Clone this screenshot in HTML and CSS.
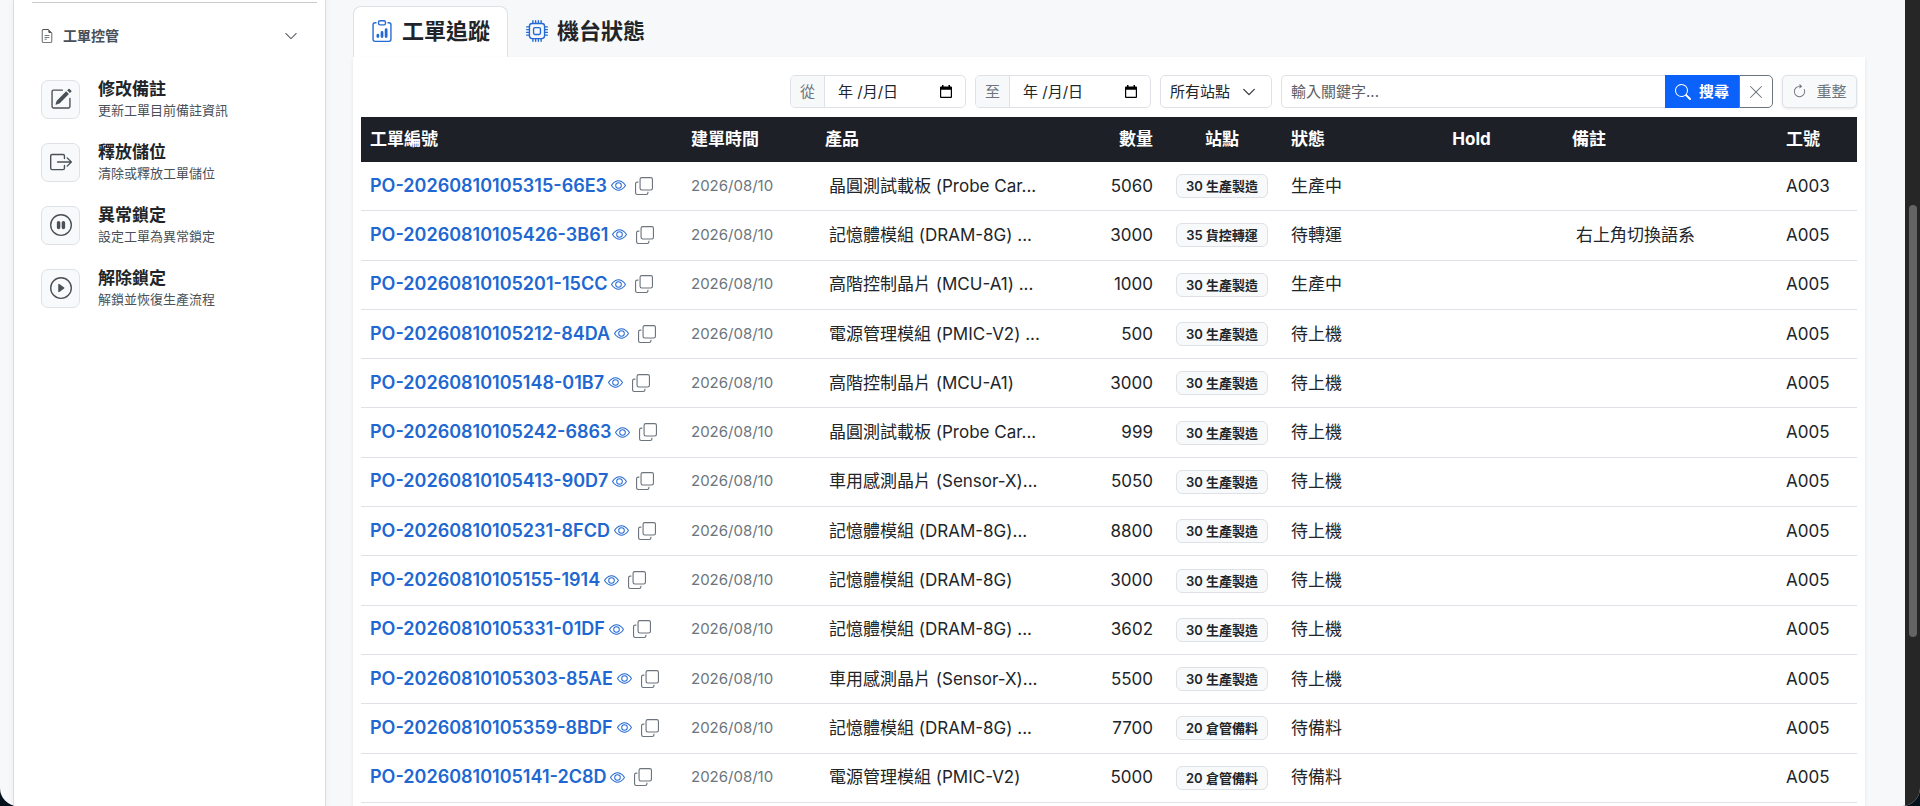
FILE: index.html
```
<!DOCTYPE html>
<html lang="zh-Hant">
<head>
    <meta charset="UTF-8">
    <meta name="viewport" content="width=device-width, initial-scale=1.0">
    <title>工單追蹤</title>
    <link rel="stylesheet" href="styles.css">
</head>
<body>
    <svg class="sprite" aria-hidden="true">
        <symbol id="i-file" viewBox="0 0 16 16">
            <path d="M5.5 7a.5.5 0 0 0 0 1h5a.5.5 0 0 0 0-1zM5 9.5a.5.5 0 0 1 .5-.5h5a.5.5 0 0 1 0 1h-5a.5.5 0 0 1-.5-.5m0 2a.5.5 0 0 1 .5-.5h2a.5.5 0 0 1 0 1h-2a.5.5 0 0 1-.5-.5"/>
            <path d="M9.5 0H4a2 2 0 0 0-2 2v12a2 2 0 0 0 2 2h8a2 2 0 0 0 2-2V4.500zm0 1v2A1.500 1.500 0 0 0 11 4.500h2V14a1 1 0 0 1-1 1H4a1 1 0 0 1-1-1V2a1 1 0 0 1 1-1z"/>
        </symbol>
        <symbol id="i-down" viewBox="0 0 16 16">
            <path fill-rule="evenodd" d="M1.646 4.646a.5.5 0 0 1 .708 0L8 10.293l5.646-5.647a.5.5 0 0 1 .708.708l-6 6a.5.5 0 0 1-.708 0l-6-6a.5.5 0 0 1 0-.708"/>
        </symbol>
        <symbol id="i-edit" viewBox="0 0 16 16">
            <path d="M15.502 1.940a.5.5 0 0 1 0 .706L14.459 3.690l-2-2L13.502.646a.5.5 0 0 1 .707 0l1.293 1.293zm-1.750 2.456-2-2L4.939 9.210a.5.5 0 0 0-.121.196l-.805 2.414a.25.25 0 0 0 .316.316l2.414-.805a.5.5 0 0 0 .196-.120z"/>
            <path fill-rule="evenodd" d="M1 13.500A1.500 1.500 0 0 0 2.500 15h11a1.500 1.500 0 0 0 1.500-1.500v-6a.5.5 0 0 0-1 0v6a.5.5 0 0 1-.5.5h-11a.5.5 0 0 1-.5-.5v-11a.5.5 0 0 1 .5-.5H9a.5.5 0 0 0 0-1H2.500A1.500 1.500 0 0 0 1 2.500z"/>
        </symbol>
        <symbol id="i-out" viewBox="0 0 16 16">
            <path fill-rule="evenodd" d="M10 12.500a.5.5 0 0 1-.5.5h-8a.5.5 0 0 1-.5-.5v-9a.5.5 0 0 1 .5-.5h8a.5.5 0 0 1 .5.5v2a.5.5 0 0 0 1 0v-2A1.500 1.500 0 0 0 9.500 2h-8A1.500 1.500 0 0 0 0 3.500v9A1.500 1.500 0 0 0 1.500 14h8a1.500 1.500 0 0 0 1.500-1.500v-2a.5.5 0 0 0-1 0z"/>
            <path fill-rule="evenodd" d="M15.854 8.354a.5.5 0 0 0 0-.708l-3-3a.5.5 0 0 0-.708.708L14.293 7.500H5.500a.5.5 0 0 0 0 1h8.793l-2.147 2.146a.5.5 0 0 0 .708.708z"/>
        </symbol>
        <symbol id="i-pause" viewBox="0 0 16 16">
            <path d="M8 15A7 7 0 1 1 8 1a7 7 0 0 1 0 14m0 1A8 8 0 1 0 8 0a8 8 0 0 0 0 16"/>
            <path d="M5 6.250a1.250 1.250 0 1 1 2.500 0v3.500a1.250 1.250 0 1 1-2.500 0zm3.500 0a1.250 1.250 0 1 1 2.500 0v3.500a1.250 1.250 0 1 1-2.500 0z"/>
        </symbol>
        <symbol id="i-play" viewBox="0 0 16 16">
            <path d="M8 15A7 7 0 1 1 8 1a7 7 0 0 1 0 14m0 1A8 8 0 1 0 8 0a8 8 0 0 0 0 16"/>
            <path d="M6.271 5.055a.5.5 0 0 1 .520.038l3.500 2.500a.5.5 0 0 1 0 .814l-3.500 2.500A.5.5 0 0 1 6 10.500v-5a.5.5 0 0 1 .271-.445"/>
        </symbol>
        <symbol id="i-clipboard" viewBox="0 0 16 16">
            <path d="M4 11a1 1 0 1 1 2 0v1a1 1 0 1 1-2 0zm6-4a1 1 0 1 1 2 0v5a1 1 0 1 1-2 0zM7 9a1 1 0 0 1 2 0v3a1 1 0 1 1-2 0z"/>
            <path d="M4 1.500H3a2 2 0 0 0-2 2V14a2 2 0 0 0 2 2h10a2 2 0 0 0 2-2V3.500a2 2 0 0 0-2-2h-1v1h1a1 1 0 0 1 1 1V14a1 1 0 0 1-1 1H3a1 1 0 0 1-1-1V3.500a1 1 0 0 1 1-1h1z"/>
            <path d="M9.500 1a.5.5 0 0 1 .5.5v1a.5.5 0 0 1-.5.5h-3a.5.5 0 0 1-.5-.5v-1a.5.5 0 0 1 .5-.5zm-3-1A1.500 1.500 0 0 0 5 1.500v1A1.500 1.500 0 0 0 6.500 4h3A1.500 1.500 0 0 0 11 2.500v-1A1.500 1.500 0 0 0 9.500 0z"/>
        </symbol>
        <symbol id="i-cpu" viewBox="0 0 16 16">
            <path d="M5 0a.5.5 0 0 1 .5.5V2h1V.5a.5.5 0 0 1 1 0V2h1V.5a.5.5 0 0 1 1 0V2h1V.5a.5.5 0 0 1 1 0V2A2.500 2.500 0 0 1 14 4.500h1.500a.5.5 0 0 1 0 1H14v1h1.500a.5.5 0 0 1 0 1H14v1h1.500a.5.5 0 0 1 0 1H14v1h1.500a.5.5 0 0 1 0 1H14a2.500 2.500 0 0 1-2.500 2.500v1.500a.5.5 0 0 1-1 0V14h-1v1.500a.5.5 0 0 1-1 0V14h-1v1.500a.5.5 0 0 1-1 0V14h-1v1.500a.5.5 0 0 1-1 0V14A2.500 2.500 0 0 1 2 11.500H.5a.5.5 0 0 1 0-1H2v-1H.5a.5.5 0 0 1 0-1H2v-1H.5a.5.5 0 0 1 0-1H2v-1H.5a.5.5 0 0 1 0-1H2A2.500 2.500 0 0 1 4.500 2V.5A.5.5 0 0 1 5 0m-.5 3A1.500 1.500 0 0 0 3 4.500v7A1.500 1.500 0 0 0 4.500 13h7a1.500 1.500 0 0 0 1.500-1.500v-7A1.500 1.500 0 0 0 11.500 3zM5 6.500A1.500 1.500 0 0 1 6.500 5h3A1.500 1.500 0 0 1 11 6.500v3A1.500 1.500 0 0 1 9.500 11h-3A1.500 1.500 0 0 1 5 9.500zM6.500 6a.5.5 0 0 0-.5.5v3a.5.5 0 0 0 .5.5h3a.5.5 0 0 0 .5-.5v-3a.5.5 0 0 0-.5-.5z"/>
        </symbol>
        <symbol id="i-calendar" viewBox="0 0 12 14">
            <path fill-rule="evenodd" d="M2 0h1.500v1.500h5V0H10v1.500h1A1 1 0 0 1 12 2.500V12a1 1 0 0 1-1 1H1a1 1 0 0 1-1-1V2.500A1 1 0 0 1 1 1.500h1zM1.200 4.800v7h9.600v-7z"/>
        </symbol>
        <symbol id="i-search" viewBox="0 0 16 16">
            <path d="M11.742 10.344a6.500 6.500 0 1 0-1.397 1.398h-.001q.044.060.098.115l3.850 3.850a1 1 0 0 0 1.415-1.414l-3.850-3.850a1 1 0 0 0-.115-.100zM12 6.500a5.500 5.500 0 1 1-11 0 5.500 5.500 0 0 1 11 0"/>
        </symbol>
        <symbol id="i-x" viewBox="0 0 16 16">
            <path d="M2.146 2.854a.5.5 0 1 1 .708-.708L8 7.293l5.146-5.147a.5.5 0 0 1 .708.708L8.707 8l5.147 5.146a.5.5 0 0 1-.708.708L8 8.707l-5.146 5.147a.5.5 0 0 1-.708-.708L7.293 8z"/>
        </symbol>
        <symbol id="i-refresh" viewBox="0 0 16 16">
            <path fill-rule="evenodd" d="M8 3a5 5 0 1 0 4.546 2.914.5.5 0 0 1 .908-.417A6 6 0 1 1 8 2z"/>
            <path d="M8 4.466V.534a.25.25 0 0 1 .410-.192l2.360 1.966c.12.1.12.284 0 .384L8.410 4.658A.25.25 0 0 1 8 4.466"/>
        </symbol>
        <symbol id="i-eye" viewBox="0 0 16 16">
            <path d="M16 8s-3-5.500-8-5.500S0 8 0 8s3 5.500 8 5.500S16 8 16 8M1.173 8a13 13 0 0 1 1.660-2.043C4.120 4.668 5.880 3.500 8 3.500s3.879 1.168 5.168 2.457A13 13 0 0 1 14.828 8q-.086.130-.195.288c-.335.480-.830 1.120-1.465 1.755C11.879 11.332 10.119 12.500 8 12.500s-3.879-1.168-5.168-2.457A13 13 0 0 1 1.172 8z"/>
            <path d="M8 5.500a2.500 2.500 0 1 0 0 5 2.500 2.500 0 0 0 0-5M4.500 8a3.500 3.500 0 1 1 7 0 3.500 3.500 0 0 1-7 0"/>
        </symbol>
        <symbol id="i-copy" viewBox="0 0 16 16">
            <path fill-rule="evenodd" d="M4 2a2 2 0 0 1 2-2h8a2 2 0 0 1 2 2v8a2 2 0 0 1-2 2H6a2 2 0 0 1-2-2zm2-1a1 1 0 0 0-1 1v8a1 1 0 0 0 1 1h8a1 1 0 0 0 1-1V2a1 1 0 0 0-1-1zM2 5a1 1 0 0 0-1 1v8a1 1 0 0 0 1 1h8a1 1 0 0 0 1-1v-1h1v1a2 2 0 0 1-2 2H2a2 2 0 0 1-2-2V6a2 2 0 0 1 2-2h1v1z"/>
        </symbol>
    </svg>

    <div class="app">
        <aside class="sidebar">
            <hr>
            <button type="button" class="section-toggle">
                <svg class="icon-sm"><use href="#i-file"/></svg>
                <span>工單控管</span>
                <svg class="chevron"><use href="#i-down"/></svg>
            </button>
            <nav class="side-menu">
                <a href="#" class="side-item">
                    <span class="side-icon"><svg><use href="#i-edit"/></svg></span>
                    <span class="side-text"><strong>修改備註</strong><small>更新工單目前備註資訊</small></span>
                </a>
                <a href="#" class="side-item">
                    <span class="side-icon"><svg><use href="#i-out"/></svg></span>
                    <span class="side-text"><strong>釋放儲位</strong><small>清除或釋放工單儲位</small></span>
                </a>
                <a href="#" class="side-item">
                    <span class="side-icon"><svg><use href="#i-pause"/></svg></span>
                    <span class="side-text"><strong>異常鎖定</strong><small>設定工單為異常鎖定</small></span>
                </a>
                <a href="#" class="side-item">
                    <span class="side-icon"><svg><use href="#i-play"/></svg></span>
                    <span class="side-text"><strong>解除鎖定</strong><small>解鎖並恢復生產流程</small></span>
                </a>
            </nav>
        </aside>

        <main class="content">
            <div class="tabs">
                <button type="button" class="tab active"><svg><use href="#i-clipboard"/></svg>工單追蹤</button>
                <button type="button" class="tab"><svg><use href="#i-cpu"/></svg>機台狀態</button>
            </div>

            <section class="panel">
                <form class="toolbar">
                    <div class="input-group date-group">
                        <label for="dateFrom">從</label>
                        <input type="text" id="dateFrom" placeholder="年 /月/日">
                        <svg class="calendar"><use href="#i-calendar"/></svg>
                    </div>
                    <div class="input-group date-group">
                        <label for="dateTo">至</label>
                        <input type="text" id="dateTo" placeholder="年 /月/日">
                        <svg class="calendar"><use href="#i-calendar"/></svg>
                    </div>
                    <select class="station-select" aria-label="站點">
                        <option>所有站點</option>
                        <option>20 倉管備料</option>
                        <option>30 生產製造</option>
                        <option>35 貨控轉運</option>
                    </select>
                    <div class="search-group">
                        <input type="text" id="keyword" placeholder="輸入關鍵字..." aria-label="輸入關鍵字">
                        <button type="button" class="btn-search"><svg><use href="#i-search"/></svg>搜尋</button>
                        <button type="button" class="btn-clear" aria-label="清除"><svg><use href="#i-x"/></svg></button>
                    </div>
                    <button type="button" class="btn-refresh"><svg><use href="#i-refresh"/></svg>重整</button>
                </form>

                <div class="table-wrap">
                    <table>
                        <colgroup>
                            <col class="col-po">
                            <col class="col-date">
                            <col class="col-product">
                            <col class="col-qty">
                            <col class="col-station">
                            <col class="col-status">
                            <col class="col-hold">
                            <col>
                            <col class="col-staff">
                        </colgroup>
                        <thead>
                            <tr>
                                <th>工單編號</th>
                                <th>建單時間</th>
                                <th>產品</th>
                                <th class="num">數量</th>
                                <th class="center">站點</th>
                                <th>狀態</th>
                                <th class="center">Hold</th>
                                <th>備註</th>
                                <th>工號</th>
                            </tr>
                        </thead>
                        <tbody id="orders"></tbody>
                    </table>
                </div>
            </section>
        </main>

        <div class="scrollbar"><div class="thumb"></div></div>
    </div>

    <script>
        // 單號, 產品, 數量, 站點, 狀態, 備註, 工號
        const orders = [
            ["PO-20260810105315-66E3", "晶圓測試載板 (Probe Car...", 5060, "30 生產製造", "生產中", "", "A003"],
            ["PO-20260810105426-3B61", "記憶體模組 (DRAM-8G) ...", 3000, "35 貨控轉運", "待轉運", "右上角切換語系", "A005"],
            ["PO-20260810105201-15CC", "高階控制晶片 (MCU-A1) ...", 1000, "30 生產製造", "生產中", "", "A005"],
            ["PO-20260810105212-84DA", "電源管理模組 (PMIC-V2) ...", 500, "30 生產製造", "待上機", "", "A005"],
            ["PO-20260810105148-01B7", "高階控制晶片 (MCU-A1)", 3000, "30 生產製造", "待上機", "", "A005"],
            ["PO-20260810105242-6863", "晶圓測試載板 (Probe Car...", 999, "30 生產製造", "待上機", "", "A005"],
            ["PO-20260810105413-90D7", "車用感測晶片 (Sensor-X)...", 5050, "30 生產製造", "待上機", "", "A005"],
            ["PO-20260810105231-8FCD", "記憶體模組 (DRAM-8G)...", 8800, "30 生產製造", "待上機", "", "A005"],
            ["PO-20260810105155-1914", "記憶體模組 (DRAM-8G)", 3000, "30 生產製造", "待上機", "", "A005"],
            ["PO-20260810105331-01DF", "記憶體模組 (DRAM-8G) ...", 3602, "30 生產製造", "待上機", "", "A005"],
            ["PO-20260810105303-85AE", "車用感測晶片 (Sensor-X)...", 5500, "30 生產製造", "待上機", "", "A005"],
            ["PO-20260810105359-8BDF", "記憶體模組 (DRAM-8G) ...", 7700, "20 倉管備料", "待備料", "", "A005"],
            ["PO-20260810105141-2C8D", "電源管理模組 (PMIC-V2)", 5000, "20 倉管備料", "待備料", "", "A005"]
        ];

        document.getElementById("orders").innerHTML = orders.map(([po, product, qty, station, status, note, staff]) => `
            <tr>
                <td>
                    <div class="po">
                        <a href="#">${po}<svg class="eye"><use href="#i-eye"/></svg></a>
                        <button type="button" class="btn-copy" aria-label="複製"><svg><use href="#i-copy"/></svg></button>
                    </div>
                </td>
                <td class="date">2026/08/10</td>
                <td class="inset">${product}</td>
                <td class="num">${qty}</td>
                <td class="center"><span class="badge">${station}</span></td>
                <td>${status}</td>
                <td></td>
                <td class="inset">${note}</td>
                <td>${staff}</td>
            </tr>`).join("");
    </script>
</body>
</html>
```
FILE: styles.css
```
* {
    box-sizing: border-box;
}
html {
    background-color: #04101c;
}
body {
    font-family: Inter, "Noto Sans CJK TC", sans-serif;
    font-size: 17px;
    line-height: 24px;
    color: #212529;
    margin: 0;
}
svg {
    fill: currentColor;
    flex: none;
}
.sprite {
    display: none;
}
button, input, select {
    font: inherit;
    color: inherit;
    margin: 0;
}
button {
    cursor: pointer;
}
.app {
    display: flex;
    min-height: 100vh;
    background-color: #f6f8fa;
    border-radius: 0 0 18px 18px;
    overflow: hidden;
}

/* sidebar */
.sidebar {
    width: 313px;
    flex: none;
    margin-left: 13px;
    padding: 0 8px 0 18px;
    background-color: white;
    border: 1px solid #d9dde1;
    border-width: 0 1px;
    box-shadow: 0 0 8px rgba(0,0,0,0.05);
}
.sidebar hr {
    height: 1px;
    margin: 2px 0 0;
    border: 0;
    background-color: #c9cbcd;
}
.section-toggle {
    display: flex;
    align-items: center;
    gap: 9px;
    width: 100%;
    padding: 21px 19px 20px 8px;
    border: 0;
    background: none;
    font-size: 14px;
    font-weight: 600;
    color: #495057;
}
.section-toggle .icon-sm {
    width: 14px;
    height: 14px;
}
.section-toggle .chevron {
    width: 14px;
    height: 14px;
    margin-left: auto;
}
.side-menu {
    display: flex;
    flex-direction: column;
    gap: 21px;
    padding: 10px 9px;
}
.side-item {
    display: flex;
    align-items: center;
    gap: 18px;
    height: 42px;
    text-decoration: none;
    color: #495057;
}
.side-icon {
    display: flex;
    align-items: center;
    justify-content: center;
    width: 39px;
    height: 39px;
    background-color: #f8f9fa;
    border: 1px solid #dee2e6;
    border-radius: 7px;
}
.side-icon svg {
    width: 22px;
    height: 22px;
}
.side-text strong {
    display: block;
    font-weight: 700;
    line-height: 21px;
    color: #212529;
}
.side-text small {
    display: block;
    font-size: 13px;
    line-height: 20px;
}

/* tabs */
.content {
    flex: 1;
    display: flex;
    flex-direction: column;
    min-width: 0;
    padding: 6px 40px 0 27px;
}
.tabs {
    display: flex;
}
.tab {
    display: flex;
    align-items: center;
    gap: 9px;
    height: 51px;
    padding: 0 17px 2px;
    border: 1px solid transparent;
    border-bottom: 0;
    border-radius: 8px 8px 0 0;
    background: none;
    font-size: 22px;
    font-weight: 600;
}
.tab.active {
    background-color: white;
    border-color: #dee2e6;
}
.tab svg {
    width: 22px;
    height: 22px;
    color: #2469d6;
}

/* toolbar */
.panel {
    flex: 1;
    display: flex;
    flex-direction: column;
    padding: 18px 8px 3px;
    background-color: white;
    box-shadow: 0 2px 4px rgba(0,0,0,0.08);
}
.toolbar {
    display: flex;
    justify-content: flex-end;
    gap: 9px;
    height: 33px;
    margin-bottom: 9px;
    font-size: 15px;
}
.input-group {
    display: flex;
    align-items: center;
    height: 33px;
    border: 1px solid #dee2e6;
    border-radius: 5px;
    overflow: hidden;
}
.input-group input {
    flex: 1;
    min-width: 0;
    height: 100%;
    border: 0;
    outline: 0;
    background: none;
}
.date-group {
    width: 176px;
}
.date-group label {
    display: flex;
    align-items: center;
    height: 100%;
    padding: 0 9px;
    background-color: #f6f8fa;
    border-right: 1px solid #dee2e6;
    color: #6c757d;
}
.date-group input {
    padding: 0 0 0 13px;
}
.date-group input::placeholder {
    color: #212529;
    opacity: 1;
}
.calendar {
    width: 12px;
    height: 14px;
    margin-right: 13px;
    color: black;
}
.station-select {
    width: 112px;
    height: 33px;
    padding: 0 26px 0 9px;
    border: 1px solid #dee2e6;
    border-radius: 5px;
    appearance: none;
    background: white url("data:image/svg+xml,%3Csvg xmlns='http://www.w3.org/2000/svg' viewBox='0 0 16 16'%3E%3Cpath fill='none' stroke='%23343a40' stroke-linecap='round' stroke-linejoin='round' stroke-width='1.500' d='m2 5 6 6 6-6'/%3E%3C/svg%3E") no-repeat right 15px center / 14px 14px;
}
.search-group {
    display: flex;
    width: 492px;
}
.search-group input {
    flex: 1;
    min-width: 0;
    height: 33px;
    padding: 0 9px;
    border: 1px solid #dee2e6;
    border-right: 0;
    border-radius: 5px 0 0 5px;
    outline: 0;
}
.search-group input::placeholder {
    color: #5a6066;
    opacity: 1;
}
.btn-search, .btn-clear, .btn-refresh {
    display: flex;
    align-items: center;
    justify-content: center;
    height: 33px;
    padding: 0;
}
.btn-search {
    width: 74px;
    gap: 8px;
    border: 0;
    background-color: #0a62fb;
    color: white;
    font-weight: 600;
}
.btn-search svg {
    width: 16px;
    height: 16px;
}
.btn-clear {
    width: 34px;
    border: 1px solid #6c757d;
    border-radius: 0 5px 5px 0;
    background-color: white;
    color: #6c757d;
}
.btn-clear svg {
    width: 16px;
    height: 16px;
}
.btn-refresh {
    width: 75px;
    gap: 9px;
    border: 1px solid #dee2e6;
    border-radius: 5px;
    background-color: #f8f9fa;
    box-shadow: 0 1px 3px rgba(0,0,0,0.1);
    color: #6c757d;
}
.btn-refresh svg {
    width: 15px;
    height: 15px;
}

/* orders table */
.table-wrap {
    flex: 1;
    display: grid;
}
table {
    width: 100%;
    table-layout: fixed;
    border-collapse: separate;
    border-spacing: 0;
}
.col-po { width: 321px; }
.col-date { width: 134px; }
.col-product { width: 246px; }
.col-qty { width: 100px; }
.col-station { width: 120px; }
.col-status { width: 98px; }
.col-hold { width: 183px; }
.col-staff { width: 80px; }
th {
    height: 45px;
    padding: 0 9px 2px;
    background-color: #1d2026;
    color: white;
    font-weight: 700;
    text-align: left;
}
td {
    height: 48px;
    padding: 0 9px 1px;
    border-bottom: 1px solid #dee2e6;
    white-space: nowrap;
}
.inset {
    padding-left: 13px;
}
.num {
    text-align: right;
}
.center {
    text-align: center;
}
.date {
    font-size: 15px;
    color: #6c757d;
}
.po {
    display: flex;
    align-items: center;
    gap: 9px;
}
.po a {
    display: flex;
    align-items: center;
    gap: 4px;
    font-size: 18px;
    font-weight: 600;
    color: #2067d2;
    text-decoration: none;
}
.eye {
    width: 15px;
    height: 15px;
}
.btn-copy {
    display: flex;
    padding: 0;
    border: 0;
    background: none;
    color: #6c757d;
}
.btn-copy svg {
    width: 18px;
    height: 18px;
}
.badge {
    display: inline-block;
    padding: 0 9px;
    border: 1px solid #dee2e6;
    border-radius: 6px;
    background-color: #f8f9fa;
    font-size: 13px;
    font-weight: 600;
    line-height: 22px;
}

/* window scrollbar */
.scrollbar {
    width: 15px;
    flex: none;
    padding: 205px 3px 0 4px;
    background-color: #262626;
}
.thumb {
    height: 432px;
    max-height: 70vh;
    border-radius: 4px;
    background-color: #646464;
}
```
